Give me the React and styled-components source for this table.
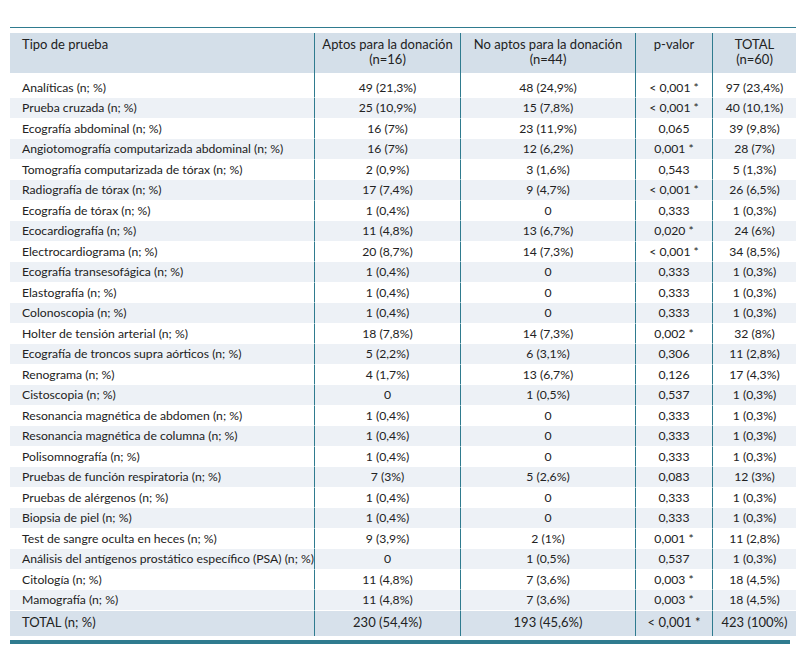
import React from "react";
import styled, { createGlobalStyle } from "styled-components";

const GlobalStyle = createGlobalStyle`
  html, body {
    margin: 0;
    padding: 0;
    background: #ffffff;
  }
  body {
    font-family: Lato, "Open Sans", "Liberation Sans", sans-serif;
    color: #222;
  }
`;

const TEAL = "#2f7b8f";

const Page = styled.div`
  padding: 27px 16px 0 10px;
  width: 786px;
`;

const TopRule = styled.div`
  height: 1px;
  background: ${TEAL};
  margin-bottom: 5px;
`;

const Table = styled.table`
  width: 786px;
  table-layout: fixed;
  border-collapse: separate;
  border-spacing: 0;
`;

const HeadCell = styled.th`
  background: #d4dfe9;
  font-weight: 400;
  font-size: 13px;
  line-height: 15px;
  height: 40px;
  padding: 4px 6px 0;
  box-sizing: border-box;
  vertical-align: top;
  white-space: nowrap;
  text-align: ${(p) => (p.$left ? "left" : "center")};
  padding-left: ${(p) => (p.$left ? "12px" : "6px")};
  border-left: ${(p) => (p.$left ? "none" : `1px solid ${TEAL}`)};
`;

const Row = styled.tr`
  background: ${(p) => (p.$total ? "#d7e1eb" : p.$striped ? "#edf1f6" : "#ffffff")};
`;

const Cell = styled.td`
  height: ${(p) => (p.$total ? "25px" : p.$first ? "24px" : "19.5px")};
  padding: ${(p) => (p.$first ? "5px" : "0")} 6px 0;
  padding-left: ${(p) => (p.$left ? "12px" : "6px")};
  box-sizing: border-box;
  line-height: ${(p) => (p.$first ? "19px" : "19.5px")};
  font-size: ${(p) => (p.$total ? "13px" : "12.2px")};
  text-align: ${(p) => (p.$left ? "left" : "center")};
  white-space: nowrap;
  vertical-align: middle;
  border-left: ${(p) => (p.$left ? "none" : `1px solid ${TEAL}`)};
  border-bottom: ${(p) => (p.$total ? "none" : "1px solid #ffffff")};
`;

const BottomBar = styled.div`
  height: 4px;
  margin-top: 4px;
  width: 780px;
  background: ${TEAL};
`;

const rows = [
  ["Analíticas (n; %)", "49 (21,3%)", "48 (24,9%)", "< 0,001 *", "97 (23,4%)"],
  ["Prueba cruzada (n; %)", "25 (10,9%)", "15 (7,8%)", "< 0,001 *", "40 (10,1%)"],
  ["Ecografía abdominal (n; %)", "16 (7%)", "23 (11,9%)", "0,065", "39 (9,8%)"],
  ["Angiotomografía computarizada abdominal (n; %)", "16 (7%)", "12 (6,2%)", "0,001 *", "28 (7%)"],
  ["Tomografía computarizada de tórax (n; %)", "2 (0,9%)", "3 (1,6%)", "0,543", "5 (1,3%)"],
  ["Radiografía de tórax (n; %)", "17 (7,4%)", "9 (4,7%)", "< 0,001 *", "26 (6,5%)"],
  ["Ecografía de tórax (n; %)", "1 (0,4%)", "0", "0,333", "1 (0,3%)"],
  ["Ecocardiografía (n; %)", "11 (4,8%)", "13 (6,7%)", "0,020 *", "24 (6%)"],
  ["Electrocardiograma (n; %)", "20 (8,7%)", "14 (7,3%)", "< 0,001 *", "34 (8,5%)"],
  ["Ecografía transesofágica (n; %)", "1 (0,4%)", "0", "0,333", "1 (0,3%)"],
  ["Elastografía (n; %)", "1 (0,4%)", "0", "0,333", "1 (0,3%)"],
  ["Colonoscopia (n; %)", "1 (0,4%)", "0", "0,333", "1 (0,3%)"],
  ["Holter de tensión arterial (n; %)", "18 (7,8%)", "14 (7,3%)", "0,002 *", "32 (8%)"],
  ["Ecografía de troncos supra aórticos (n; %)", "5 (2,2%)", "6 (3,1%)", "0,306", "11 (2,8%)"],
  ["Renograma (n; %)", "4 (1,7%)", "13 (6,7%)", "0,126", "17 (4,3%)"],
  ["Cistoscopia (n; %)", "0", "1 (0,5%)", "0,537", "1 (0,3%)"],
  ["Resonancia magnética de abdomen (n; %)", "1 (0,4%)", "0", "0,333", "1 (0,3%)"],
  ["Resonancia magnética de columna (n; %)", "1 (0,4%)", "0", "0,333", "1 (0,3%)"],
  ["Polisomnografía (n; %)", "1 (0,4%)", "0", "0,333", "1 (0,3%)"],
  ["Pruebas de función respiratoria (n; %)", "7 (3%)", "5 (2,6%)", "0,083", "12 (3%)"],
  ["Pruebas de alérgenos (n; %)", "1 (0,4%)", "0", "0,333", "1 (0,3%)"],
  ["Biopsia de piel (n; %)", "1 (0,4%)", "0", "0,333", "1 (0,3%)"],
  ["Test de sangre oculta en heces (n; %)", "9 (3,9%)", "2 (1%)", "0,001 *", "11 (2,8%)"],
  ["Análisis del antígenos prostático específico (PSA) (n; %)", "0", "1 (0,5%)", "0,537", "1 (0,3%)"],
  ["Citología (n; %)", "11 (4,8%)", "7 (3,6%)", "0,003 *", "18 (4,5%)"],
  ["Mamografía (n; %)", "11 (4,8%)", "7 (3,6%)", "0,003 *", "18 (4,5%)"],
];

const total = ["TOTAL (n; %)", "230 (54,4%)", "193 (45,6%)", "< 0,001 *", "423 (100%)"];

const widths = [304, 146, 175, 77, 84];

export default function App() {
  return (
    <Page>
      <GlobalStyle />
      <TopRule />
      <Table>
        <colgroup>
          {widths.map((w, i) => (
            <col key={i} style={{ width: w }} />
          ))}
        </colgroup>
        <thead>
          <tr>
            <HeadCell $left>Tipo de prueba</HeadCell>
            <HeadCell>
              Aptos para la donación
              <br />
              (n=16)
            </HeadCell>
            <HeadCell>
              No aptos para la donación
              <br />
              (n=44)
            </HeadCell>
            <HeadCell>p-valor</HeadCell>
            <HeadCell>
              TOTAL
              <br />
              (n=60)
            </HeadCell>
          </tr>
        </thead>
        <tbody>
          {rows.map((r, i) => (
            <Row key={r[0]} $striped={i % 2 === 1}>
              {r.map((v, j) => (
                <Cell key={j} $left={j === 0} $first={i === 0}>
                  {v}
                </Cell>
              ))}
            </Row>
          ))}
          <Row $total>
            {total.map((v, j) => (
              <Cell key={j} $left={j === 0} $total>
                {v}
              </Cell>
            ))}
          </Row>
        </tbody>
      </Table>
      <BottomBar />
    </Page>
  );
}
